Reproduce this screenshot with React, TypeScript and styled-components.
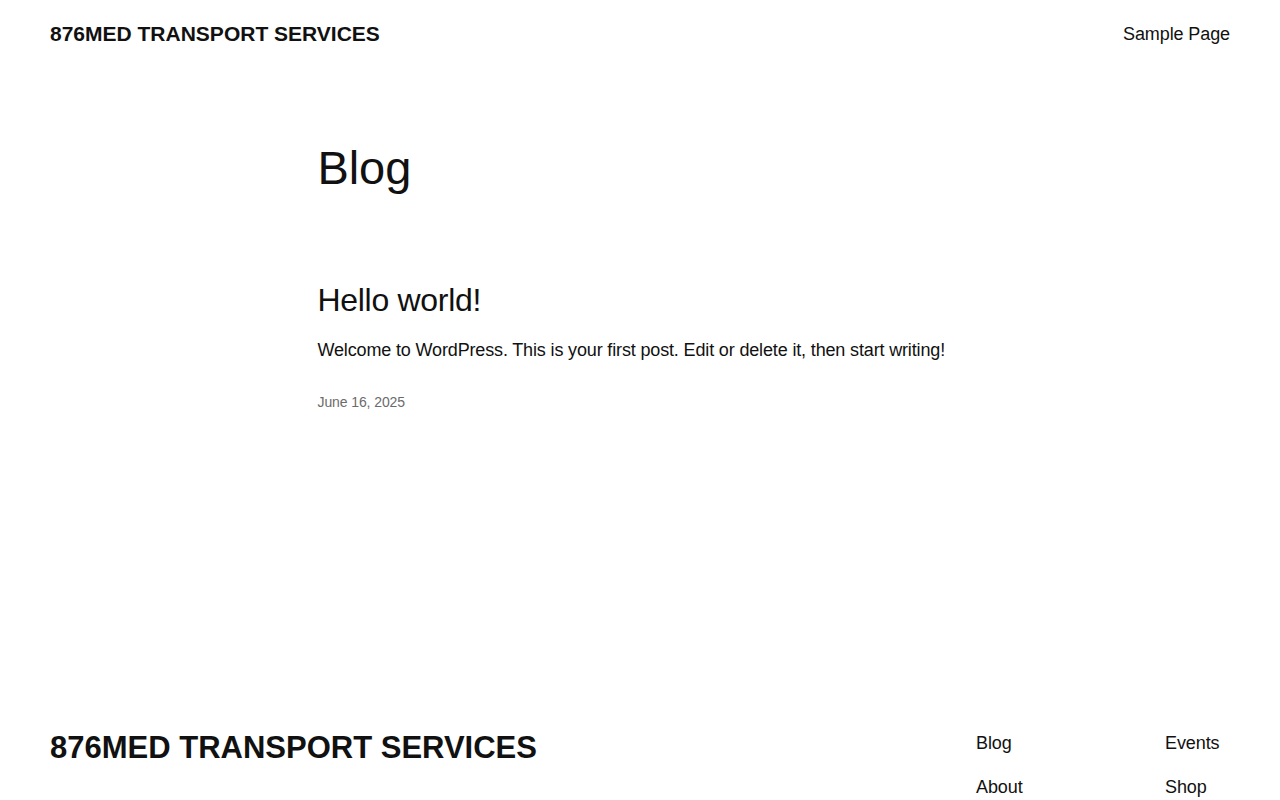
import React from "react";
import styled, { createGlobalStyle } from "styled-components";

const GlobalStyle = createGlobalStyle`
  html, body {
    margin: 0;
    padding: 0;
    background: #ffffff;
  }
  body {
    font-family: "Liberation Sans", Arial, sans-serif;
    color: #111111;
    letter-spacing: -0.1px;
    -webkit-font-smoothing: antialiased;
  }
  a {
    color: inherit;
    text-decoration: none;
  }
`;

const Page = styled.div`
  display: flex;
  flex-direction: column;
`;

const Header = styled.header`
  display: flex;
  align-items: center;
  justify-content: space-between;
  padding: 20px 50px;
  height: 28px;
`;

const SiteTitle = styled.a<{ $size: number }>`
  font-size: ${(p) => p.$size}px;
  font-weight: 700;
  line-height: 1.3;
  letter-spacing: 0;
`;

const NavLink = styled.a`
  font-size: 18px;
  line-height: 1.4;
  margin-top: 2px;
`;

const Main = styled.main`
  box-sizing: border-box;
  width: 645px;
  min-height: 660px;
  margin: 0 auto;
  padding-top: 72px;
`;

const PageHeading = styled.h1`
  margin: 0;
  font-size: 47px;
  font-weight: 400;
  line-height: 1.2;
`;

const Post = styled.article`
  margin-top: 85px;
`;

const PostTitle = styled.h2`
  margin: 0;
  font-size: 32px;
  font-weight: 400;
  line-height: 1.2;
  letter-spacing: -0.3px;
`;

const Excerpt = styled.p`
  margin: 18px 0 0;
  font-size: 18px;
  line-height: 1.4;
  letter-spacing: -0.15px;
`;

const PostDate = styled.time`
  display: block;
  margin-top: 30px;
  font-size: 14px;
  line-height: 1.4;
  color: #6b6b6b;
`;

const Footer = styled.footer`
  display: flex;
  justify-content: space-between;
  align-items: flex-start;
  padding: 0 50px 40px;
`;

const FooterNav = styled.nav`
  display: grid;
  grid-template-columns: 189px auto;
  row-gap: 19px;
  width: 254px;
  margin-top: 3px;
`;

const FooterLink = styled.a`
  font-size: 18px;
  line-height: 25px;
`;

export default function App() {
  return (
    <>
      <GlobalStyle />
      <Page>
        <Header>
          <SiteTitle href="#" $size={21}>
            876MED TRANSPORT SERVICES
          </SiteTitle>
          <NavLink href="#">Sample Page</NavLink>
        </Header>
        <Main>
          <PageHeading>Blog</PageHeading>
          <Post>
            <PostTitle>Hello world!</PostTitle>
            <Excerpt>
              Welcome to WordPress. This is your first post. Edit or delete it,
              then start writing!
            </Excerpt>
            <PostDate>June 16, 2025</PostDate>
          </Post>
        </Main>
        <Footer>
          <SiteTitle href="#" $size={31}>
            876MED TRANSPORT SERVICES
          </SiteTitle>
          <FooterNav>
            <FooterLink href="#">Blog</FooterLink>
            <FooterLink href="#">Events</FooterLink>
            <FooterLink href="#">About</FooterLink>
            <FooterLink href="#">Shop</FooterLink>
          </FooterNav>
        </Footer>
      </Page>
    </>
  );
}
